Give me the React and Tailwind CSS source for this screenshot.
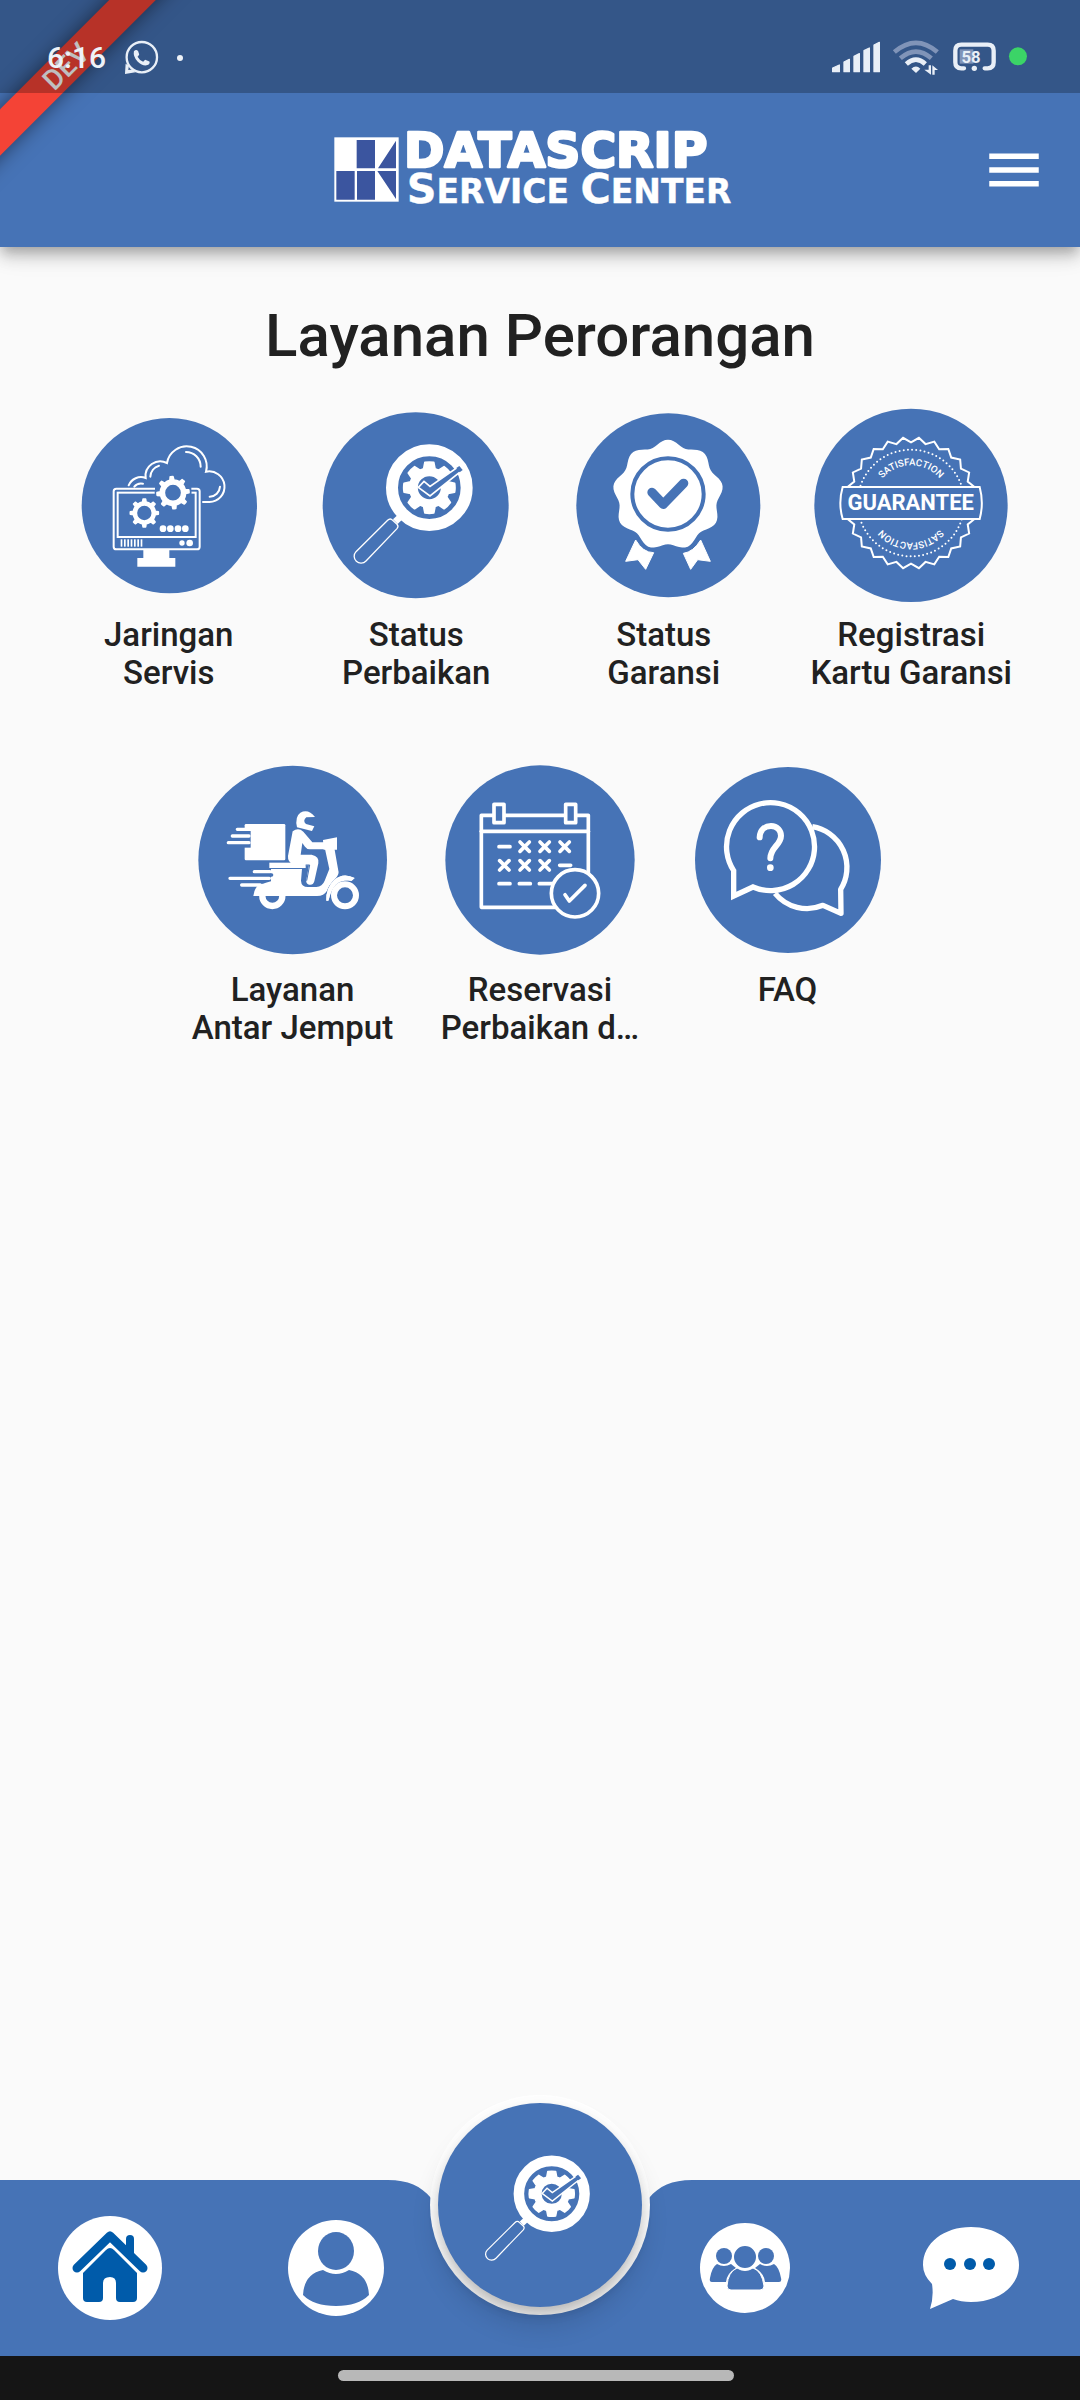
import React from "react";
import { MdMenu } from "react-icons/md";

const BLUE = "#4673b6";
const NAVY = "#005baa";

function polar(cx, cy, r, deg) {
  const a = (deg * Math.PI) / 180;
  return `${(cx + r * Math.cos(a)).toFixed(1)} ${(cy + r * Math.sin(a)).toFixed(1)}`;
}

function gearPath(cx, cy, outer, root, hole, teeth, baseDeg, tipDeg, start) {
  const step = 360 / teeth;
  let d = "";
  for (let i = 0; i < teeth; i++) {
    const a = start + i * step;
    d += `${i ? "L" : "M"}${polar(cx, cy, root, a - baseDeg)}L${polar(cx, cy, outer, a - tipDeg)}`;
    d += `A${outer} ${outer} 0 0 1 ${polar(cx, cy, outer, a + tipDeg)}L${polar(cx, cy, root, a + baseDeg)}`;
    d += `A${root} ${root} 0 0 1 ${polar(cx, cy, root, a + step - baseDeg)}`;
  }
  return `${d}ZM${cx - hole} ${cy}a${hole} ${hole} 0 1 0 ${2 * hole} 0a${hole} ${hole} 0 1 0 ${-2 * hole} 0Z`;
}

function zigzagPath(cx, cy, outer, inner, count) {
  let d = "";
  for (let i = 0; i < count * 2; i++) {
    d += `${i ? "L" : "M"}${polar(cx, cy, i % 2 ? outer : inner, -90 + (i * 180) / count)}`;
  }
  return d + "Z";
}

function scallopPath(cx, cy, r, wave, count) {
  let d = "";
  for (let a = 0; a < 360; a += 3) {
    const k = Math.cos((a * count * Math.PI) / 180);
    d += `${a ? "L" : "M"}${polar(cx, cy, r + wave * k, a - 90)}`;
  }
  return d + "Z";
}

function Round({ box, children }) {
  return (
    <svg viewBox={box} className="size-[200px]" aria-hidden="true">
      {children}
    </svg>
  );
}

function NetworkIcon() {
  return (
    <Round box="26 45 600 600">
      <circle cx="327" cy="347" r="263" fill={BLUE} />
      <g fill="none" stroke="#fff" strokeWidth="6" strokeLinecap="round">
        <path d="M205 286A40 40 0 0 1 256 264A44 44 0 0 1 320 219A60 60 0 1 1 437 245A46 46 0 1 1 447 336H428" />
        <path d="M377 186A44 44 0 0 1 421 230M270 260A36 36 0 0 1 296 227M222 290Q231 278 248 281M479 290A32 32 0 0 1 448 320" />
        <rect x="160" y="296" width="258" height="182" rx="8" fill={BLUE} />
        <rect x="172" y="308" width="234" height="133" />
      </g>
      <path d="M284 286H308V330H284ZM366 286H393V318H366Z" fill={BLUE} />
      <circle cx="338" cy="308" r="55" fill={BLUE} />
      <g fill="#fff" fillRule="evenodd" stroke="#fff" strokeWidth="5" strokeLinejoin="round">
        <path d={gearPath(338, 308, 48, 38, 26, 8, 9, 5, -5)} />
        <path d={gearPath(252, 369, 42, 33, 24, 8, 9, 5, 0)} />
      </g>
      <g fill="#fff">
        {[308, 330, 353, 375].map((x) => <circle key={x} cx={x} cy="416" r="10" />)}
        <circle cx="365" cy="459" r="8" />
        <circle cx="388" cy="459" r="10" />
        {[181, 191, 201, 211, 221, 231, 241].map((x) => <rect key={x} x={x} y="448" width="5" height="22" />)}
        <path d="M249 478H327V504H345V530H231V504H249Z" />
      </g>
    </Round>
  );
}

function MagnifierShape() {
  return (
    <>
      <circle cx="359" cy="293" r="112" fill="none" stroke="#fff" strokeWidth="36" />
      <path
        d={gearPath(359, 293, 77, 59, 37, 8, 17, 10, 0)}
        fill="#fff"
        fillRule="evenodd"
        stroke="#fff"
        strokeWidth="5"
        strokeLinejoin="round"
      />
      <path d="M326 292L343 274L361 289L449 228L459 240L361 318Z" fill={BLUE} stroke="#fff" strokeWidth="5" />
      <path d="M440 234L449 228L459 240L450 247Z" fill={BLUE} />
      <path d="M250 388L264 375L277 389L264 402Z" fill="#fff" />
      <path
        d="M234 391Q242 383 249 391L262 403Q268 409 262 416L169 513A20 20 0 0 1 139 485Z"
        fill="none"
        stroke="#fff"
        strokeWidth="4"
      />
    </>
  );
}

function RepairStatusIcon() {
  return (
    <Round box="19 45 600 600">
      <circle cx="318" cy="346" r="279" fill={BLUE} />
      <MagnifierShape />
    </Round>
  );
}

function WarrantyStatusIcon() {
  return (
    <Round box="11 45 600 600">
      <circle cx="324" cy="346" r="276" fill={BLUE} />
      <path d={scallopPath(323, 315, 157, 9, 9)} fill="#fff" />
      <circle cx="323" cy="312" r="107" fill="none" stroke={BLUE} strokeWidth="12" />
      <path d="M275 307L309 343L370 280" fill="none" stroke={BLUE} strokeWidth="28" strokeLinecap="round" strokeLinejoin="round" />
      <g fill="#fff" stroke="#fff" strokeWidth="3" strokeLinejoin="round">
        <path d="M226 450Q248 488 280 488L256 538L233 509L196 514Z" />
        <path d="M421 450Q399 486 369 490L391 538L412 509L450 514Z" />
      </g>
    </Round>
  );
}

function GuaranteeIcon() {
  return (
    <Round box="34 45 600 600">
      <defs>
        <clipPath id="seal-halves">
          <path d="M100 100H570V288H100ZM100 390H570V580H100Z" />
        </clipPath>
        <path id="seal-arc" d="M221 339A113 113 0 0 1 447 339" />
      </defs>
      <circle cx="334" cy="346" r="290" fill={BLUE} />
      <g fill="none" stroke="#fff" strokeWidth="6" clipPath="url(#seal-halves)">
        <path d={zigzagPath(334, 339, 197, 182, 26)} />
        <circle cx="334" cy="339" r="160" strokeLinecap="round" strokeDasharray="0 12.6" />
      </g>
      <path d="M129 291H540Q553 339 540 387H129Q115 339 129 291Z" fill={BLUE} stroke="#fff" strokeWidth="6" />
      <g fill="#fff" textAnchor="middle" className="font-['Roboto',sans-serif]">
        <text x="333" y="360" fontSize="66" fontWeight="700">GUARANTEE</text>
        <g fontSize="29" fontWeight="500">
          <text><textPath href="#seal-arc" startOffset="50%">SATISFACTION</textPath></text>
          <text transform="rotate(180 334 342)"><textPath href="#seal-arc" startOffset="50%">SATISFACTION</textPath></text>
        </g>
      </g>
    </Round>
  );
}

function ScooterIcon() {
  return (
    <Round box="38 30 600 600">
      <circle cx="337" cy="330" r="283" fill={BLUE} />
      <rect x="193" y="222" width="122" height="109" rx="4" fill="#fff" />
      <rect x="188" y="234" width="23" height="59" fill={BLUE} />
      <circle cx="276" cy="438" r="30" fill="none" stroke="#fff" strokeWidth="19" />
      <rect x="225" y="390" width="100" height="48" fill={BLUE} />
      <g fill="#fff">
        <rect x="267" y="338" width="109" height="16" />
        <path d="M272 357H365L362 392Q363 411 383 411H408Q426 410 433 392L447 357L434 297L462 294L474 362Q478 374 462 389Q446 404 440 422Q431 438 410 438H219Q222 414 236 404L272 394Z" />
        <path d="M438 452Q436 414 462 390Q488 366 523 384L514 392Q482 393 466 409Q453 424 444 452Z" />
        <path d="M428 270L470 262V299H430Z" />
        <path d="M350 232Q343 200 360 188Q384 175 404 201L378 202Q366 213 377 222L402 229L395 243Z" />
      </g>
      <path
        d="M337 244Q354 231 369 245L396 277H432V298H388Q380 298 374 290L366 279L361 314H394Q418 319 414 340L402 394Q398 407 386 404Q376 401 378 389L386 346H342Q321 337 323 318Z"
        fill="#fff"
      />
      <path d="M376 345H388L379 392" fill="none" stroke={BLUE} strokeWidth="3" />
      <circle cx="494" cy="436" r="33" fill="none" stroke={BLUE} strokeWidth="26" />
      <path d="M438 452Q436 414 462 390Q488 366 523 384L514 392Q482 389 466 405Q453 420 444 452Z" fill="#fff" />
      <circle cx="494" cy="436" r="33" fill="none" stroke="#fff" strokeWidth="18" />
      <path d="M210 375H274M210 395H250" stroke={BLUE} strokeWidth="10" strokeLinecap="round" />
      <path
        d="M171 238H212M156 258H206M144 278H206M222 365H269M149 385H267M184 405H240"
        stroke="#fff"
        strokeWidth="10"
        strokeLinecap="round"
      />
    </Round>
  );
}

function CalendarIcon() {
  const crosses = [[284, 290], [344, 290], [404, 290], [223, 346], [284, 346], [344, 346]];
  return (
    <Round box="30 30 600 600">
      <circle cx="330" cy="330" r="284" fill={BLUE} />
      <g fill={BLUE} stroke="#fff" strokeWidth="11" strokeLinecap="round" strokeLinejoin="round">
        <rect x="154" y="196" width="321" height="276" />
        <path d="M154 244H475" />
        <rect x="192" y="163" width="30" height="55" />
        <rect x="407" y="163" width="30" height="55" />
        <path d="M207 290H240M389 346H422M207 401H240M268 401H301M328 401H370" />
        {crosses.map(([x, y]) => (
          <path key={`${x}-${y}`} d={`M${x - 14} ${y - 14}l28 28m0 -28l-28 28`} />
        ))}
        <circle cx="435" cy="430" r="71" />
        <path d="M405 434L418 453L465 406" fill="none" />
      </g>
    </Round>
  );
}

function FaqIcon() {
  return (
    <Round box="22 30 600 600">
      <circle cx="322" cy="330" r="279" fill={BLUE} />
      <g fill="none" stroke="#fff" strokeWidth="16">
        <path d="M395 230A124 124 0 0 1 480 418L481 490L427 466A124 124 0 0 1 283 430" strokeLinejoin="round" />
        <path d="M217 411L159 438V362A132 132 0 1 1 217 411Z" />
        <path d="M237 262C238 240 252 228 271 228C290 228 301 242 301 257C301 285 269 292 269 325" strokeWidth="18" strokeLinecap="round" />
      </g>
      <circle cx="269" cy="353" r="10" fill="#fff" />
    </Round>
  );
}

const services = [
  { label: ["Jaringan", "Servis"], Icon: NetworkIcon },
  { label: ["Status", "Perbaikan"], Icon: RepairStatusIcon },
  { label: ["Status", "Garansi"], Icon: WarrantyStatusIcon },
  { label: ["Registrasi", "Kartu Garansi"], Icon: GuaranteeIcon },
  { label: ["Layanan", "Antar Jemput"], Icon: ScooterIcon },
  { label: ["Reservasi", "Perbaikan d…"], Icon: CalendarIcon },
  { label: ["FAQ"], Icon: FaqIcon },
];

function Logo() {
  return (
    <svg viewBox="30 30 1260 240" className="w-[420px]" role="img" aria-label="Datascrip Service Center">
      <rect x="43" y="52" width="193" height="193" fill="#fff" />
      <path
        d="M110 60H165V145H110ZM49 153H104V239H49ZM111 153H165V239H111ZM228 62V145H174ZM172 153H228V237Z"
        fill="#3b559f"
      />
      <g fill="#fff" stroke="#fff" fontWeight="700" className="font-['DejaVu_Sans',sans-serif]">
        <text x="252" y="142" fontSize="146" strokeWidth="8" strokeLinejoin="round">
          DATASCRIP
        </text>
        <text x="260" y="249" fontSize="99" strokeWidth="1">
          <tspan fontSize="124">S</tspan>ERVICE <tspan fontSize="124">C</tspan>ENTER
        </text>
      </g>
    </svg>
  );
}

function WhatsAppGlyph() {
  return (
    <svg viewBox="370 115 112 112" className="size-[37px]" aria-hidden="true">
      <circle cx="427" cy="170" r="46" fill="none" stroke="#e9eff7" strokeWidth="7" />
      <path d="M378 190L376 221L408 216L398 207L386 209L388 196Z" fill="#e9eff7" />
      <path
        d="M403 152Q410 144 416 152L419 162Q416 167 414 169Q420 180 431 184L437 178L450 183Q453 190 444 194Q430 198 414 183Q400 168 403 152Z"
        fill="#e9eff7"
      />
    </svg>
  );
}

function StatusGlyphs() {
  return (
    <svg viewBox="90 50 600 130" className="w-[200px]" role="img" aria-label="Signal, Wi-Fi, battery 58 percent">
      <g fill="#e9eff7" stroke="#e9eff7" strokeWidth="4" strokeLinejoin="round">
        <path d="M98 146L118 137V157H98ZM132 128L148 120V157H132ZM162 111L178 103V157H162ZM192 94L208 86V157H192ZM222 77L238 69V157H222Z" />
      </g>
      <g fill="none" stroke="#8094b8" strokeWidth="14">
        <path d="M283 98Q348 43 412 98" />
        <path d="M301 117Q348 77 394 117" />
        <path d="M319 134Q348 108 376 134" stroke="#e9eff7" />
      </g>
      <path d="M334 148Q348 135 361 148L348 161Z" fill="#e9eff7" />
      <path d="M386 138H393V166L373 151H386ZM397 138L414 152H404V166H397Z" fill="#e9eff7" />
      <path
        d="M492 147H484Q466 147 466 129V94Q466 76 484 76H563Q581 76 581 94V129Q581 147 563 147H554"
        fill="none"
        stroke="#e9eff7"
        strokeWidth="13"
        strokeLinecap="round"
      />
      <rect x="479" y="90" width="41" height="43" fill="#8094b8" />
      <circle cx="523" cy="147" r="8" fill="#e9eff7" />
      <text x="513" y="131" textAnchor="middle" fontSize="50" fontWeight="700" fill="#e9eff7" className="font-['Roboto',sans-serif]">
        58
      </text>
      <circle cx="654" cy="111" r="27" fill="#3bd467" />
    </svg>
  );
}

function HomeIcon() {
  return (
    <svg viewBox="0 0 104 104" className="size-[104px]" aria-hidden="true">
      <circle cx="52" cy="52" r="52" fill="#fff" />
      <path d="M68 40V23Q68 19 72 19Q76 19 76 23V42Z" fill={NAVY} />
      <path d="M19 52L52 20L85 52" fill="none" stroke={NAVY} strokeWidth="9" strokeLinecap="round" strokeLinejoin="round" />
      <path
        d="M52 32Q54 32 56 34L79 57V82Q79 86 75 86H62Q58 86 58 82V67Q58 61 52 61Q45 61 45 67V82Q45 86 41 86H29Q25 86 25 82V57L48 34Q50 32 52 32Z"
        fill={NAVY}
      />
    </svg>
  );
}

function PersonIcon() {
  return (
    <svg viewBox="0 0 96 96" className="size-[96px]" aria-hidden="true">
      <circle cx="48" cy="48" r="48" fill="#fff" />
      <ellipse cx="48" cy="31" rx="18" ry="19" fill={BLUE} />
      <path d="M35 50Q48 58 61 50Q80 54 81 75Q70 86 48 86Q26 86 15 75Q16 54 35 50Z" fill={BLUE} />
    </svg>
  );
}

function GroupIcon() {
  return (
    <svg viewBox="0 0 91 91" className="size-[91px]" aria-hidden="true">
      <circle cx="45" cy="45" r="45" fill="#fff" />
      <g fill={BLUE}>
        <circle cx="24" cy="33" r="8" />
        <circle cx="66" cy="33" r="8" />
        <path d="M17 41Q24 45 31 41L36 45Q27 50 26 59H12Q9 59 10 55Q12 44 17 41Z" />
        <path d="M74 41Q67 45 60 41L55 45Q64 50 65 59H79Q82 59 81 55Q79 44 74 41Z" />
        <path d="M37 45Q45 50 53 45Q62 48 64 63Q64 67 60 67H31Q27 67 27 63Q28 49 37 45Z" stroke="#fff" strokeWidth="1" />
        <circle cx="45" cy="34" r="12" stroke="#fff" strokeWidth="2" />
      </g>
    </svg>
  );
}

function ChatIcon() {
  return (
    <svg viewBox="0 0 96 82" className="w-[96px]" aria-hidden="true">
      <path d="M48 0C75 0 96 16 96 38C96 60 75 75 48 75Q38 75 30 72L7 82Q11 70 9 57Q0 48 0 38C0 16 21 0 48 0Z" fill="#fff" />
      {[27, 47, 66].map((x) => <circle key={x} cx={x} cy="37" r="6" fill={NAVY} />)}
    </svg>
  );
}

export default function App() {
  return (
    <div className="flex min-h-screen flex-col bg-[#fafafa] font-['Roboto',sans-serif] text-[#212121]">
      <header className="relative bg-[#4673b6] shadow-[0_6px_11px_-3px_rgba(0,0,0,0.2),0_11px_14px_0_rgba(0,0,0,0.14),0_3px_28px_0_rgba(0,0,0,0.12)]">
        <div className="pointer-events-none absolute top-0 left-0 size-[240px] overflow-hidden">
          <div className="absolute top-[50px] left-[-84px] flex h-[33px] w-[300px] -rotate-45 items-center justify-center bg-[#f44336] text-[28px] leading-none font-medium text-white shadow-[0_0_20px_rgba(0,0,0,0.5)]">
            DEV
          </div>
        </div>
        <div className="relative flex h-[93px] items-center bg-black/25 pt-[22px] pr-[50px] pl-[47px] text-[#eef2f8]">
          <span className="text-[30px] leading-[36px] font-medium">6:16</span>
          <span className="ml-[17px]"><WhatsAppGlyph /></span>
          <span className="ml-[17px] size-[6px] rounded-full bg-[#eef2f8]" />
          <span className="ml-auto"><StatusGlyphs /></span>
        </div>
        <div className="relative grid h-[154px] grid-cols-[1fr_auto_1fr] items-center px-[33px]">
          <span />
          <Logo />
          <button type="button" aria-label="Menu" className="justify-self-end text-white">
            <MdMenu className="size-[66px]" />
          </button>
        </div>
      </header>

      <main className="flex-1 px-[45px] pt-[53px]">
        <h1 className="text-center text-[60px] leading-[72px] font-medium">Layanan Perorangan</h1>
        <div className="mt-[33px] flex flex-wrap justify-center gap-y-[68px]">
          {services.map(({ label, Icon }) => (
            <button key={label.join(" ")} type="button" className="flex w-1/4 flex-col items-center justify-start">
              <Icon />
              <span className="mt-[11px] block min-h-[76px] text-[33px] leading-[38px] font-medium whitespace-nowrap">
                {label.map((line) => <span key={line} className="block">{line}</span>)}
              </span>
            </button>
          ))}
        </div>
      </main>

      <nav className="relative grid h-[176px] grid-cols-[220fr_232fr_176fr_234fr_218fr] items-center justify-items-center bg-[#4673b6]">
        <svg viewBox="0 0 304 18" className="absolute top-0 left-1/2 w-[304px] -translate-x-1/2" aria-hidden="true">
          <path d="M0 0C20 0 33 6 43 18H261C271 6 284 0 304 0Z" fill="#fafafa" />
        </svg>
        <button type="button" aria-label="Beranda"><HomeIcon /></button>
        <button type="button" aria-label="Profil"><PersonIcon /></button>
        <button
          type="button"
          aria-label="Status Perbaikan"
          className="absolute top-[-85px] left-1/2 flex size-[220px] -translate-x-1/2 items-center justify-center rounded-full bg-white"
        >
          <span className="flex size-[204px] items-center justify-center rounded-full bg-[#4673b6] pt-2 shadow-[0_8px_14px_-3px_rgba(0,0,0,0.16),0_17px_28px_0_rgba(0,0,0,0.14),0_3px_16px_0_rgba(0,0,0,0.04)]">
            <svg viewBox="19 45 600 600" className="size-[176px]" aria-hidden="true">
              <MagnifierShape />
            </svg>
          </span>
        </button>
        <button type="button" aria-label="Komunitas" className="col-start-4"><GroupIcon /></button>
        <button type="button" aria-label="Obrolan"><ChatIcon /></button>
      </nav>

      <div className="flex h-[44px] justify-center bg-[#151515] pt-[14px] pr-2">
        <div className="h-[11px] w-[37%] rounded-full bg-[#b8b8b8]" />
      </div>
    </div>
  );
}
